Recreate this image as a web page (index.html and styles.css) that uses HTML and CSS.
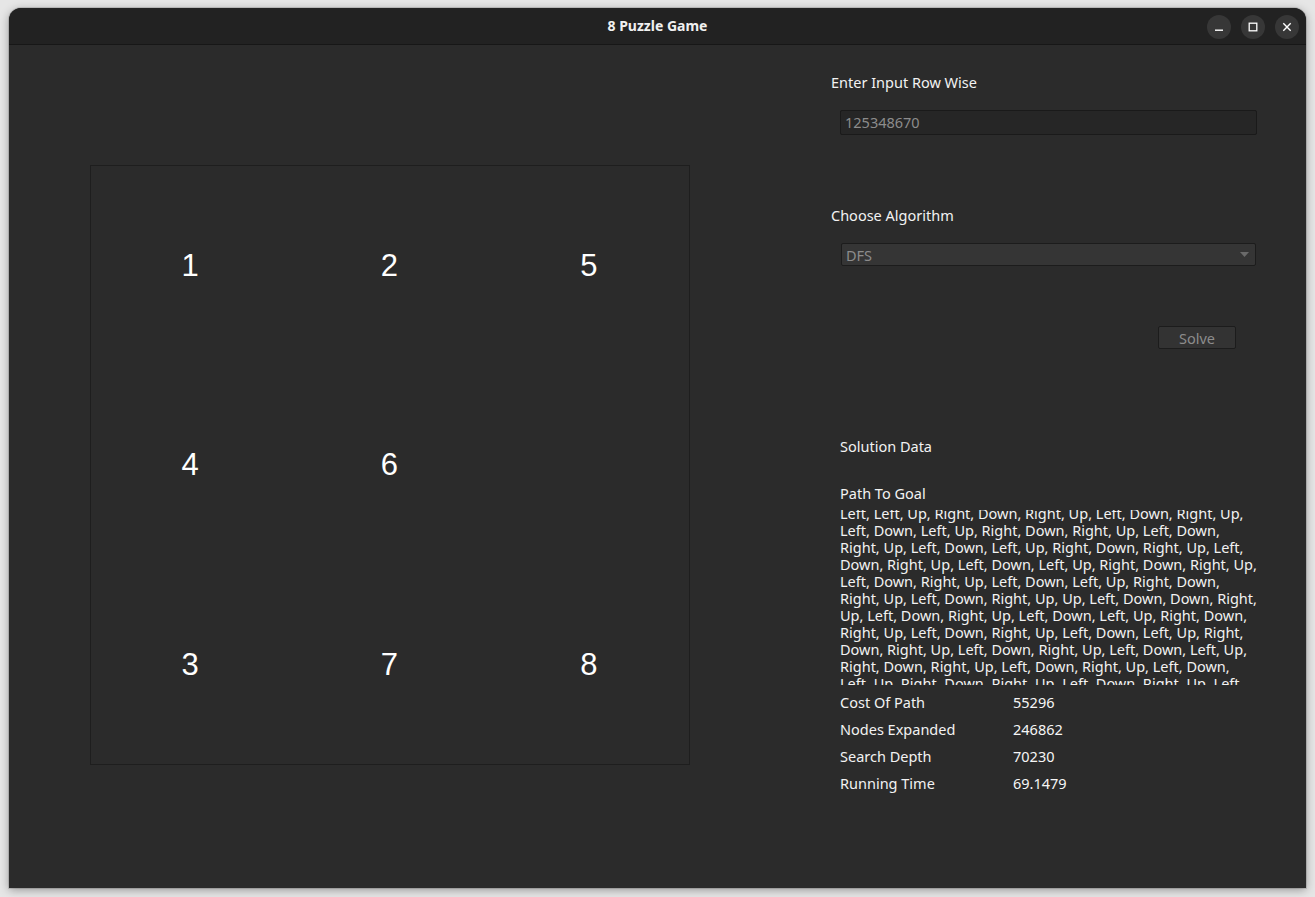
FILE: index.html
```html
<!DOCTYPE html>
<html>
<head>
<meta charset="utf-8">
<title>8 Puzzle Game</title>
<link rel="stylesheet" href="styles.css">
</head>
<body>
<div class="window">
  <div class="titlebar">
    <div class="title">8 Puzzle Game</div>
    <div class="controls">
      <div class="ctl"><svg width="12" height="12" viewBox="0 0 12 12"><rect x="2" y="8.5" width="8" height="1.4" fill="#fff"/></svg></div>
      <div class="ctl"><svg width="12" height="12" viewBox="0 0 12 12"><rect x="2.2" y="2.2" width="7.6" height="7.6" fill="none" stroke="#fff" stroke-width="1.3"/></svg></div>
      <div class="ctl"><svg width="12" height="12" viewBox="0 0 12 12"><path d="M2.3 2.3 L9.7 9.7 M9.7 2.3 L2.3 9.7" stroke="#fff" stroke-width="1.4"/></svg></div>
    </div>
  </div>
  <div class="content">
    <div class="left">
      <div class="board">
        <div class="tile">1</div><div class="tile">2</div><div class="tile">5</div>
        <div class="tile">4</div><div class="tile">6</div><div class="tile"></div>
        <div class="tile">3</div><div class="tile">7</div><div class="tile">8</div>
      </div>
    </div>
    <div class="right">
      <div class="label l1">Enter Input Row Wise</div>
      <div class="input">125348670</div>
      <div class="label l2">Choose Algorithm</div>
      <div class="select"><span>DFS</span><svg width="9" height="5" viewBox="0 0 9 5"><path d="M0 0 H9 L4.5 5 Z" fill="#6a6a6a"/></svg></div>
      <div class="btnrow"><div class="btn">Solve</div></div>
      <div class="solution">
        <div class="label sd">Solution Data</div>
        <div class="label ptg">Path To Goal</div>
        <div class="path">
          <div class="pathinner">
            <div>Left, Left, Up, Right, Down, Right, Up, Left, Down, Right, Up,</div>
            <div>Left, Down, Left, Up, Right, Down, Right, Up, Left, Down,</div>
            <div>Right, Up, Left, Down, Left, Up, Right, Down, Right, Up, Left,</div>
            <div>Down, Right, Up, Left, Down, Left, Up, Right, Down, Right, Up,</div>
            <div>Left, Down, Right, Up, Left, Down, Left, Up, Right, Down,</div>
            <div>Right, Up, Left, Down, Right, Up, Up, Left, Down, Down, Right,</div>
            <div>Up, Left, Down, Right, Up, Left, Down, Left, Up, Right, Down,</div>
            <div>Right, Up, Left, Down, Right, Up, Left, Down, Left, Up, Right,</div>
            <div>Down, Right, Up, Left, Down, Right, Up, Left, Down, Left, Up,</div>
            <div>Right, Down, Right, Up, Left, Down, Right, Up, Left, Down,</div>
            <div>Left, Up, Right, Down, Right, Up, Left, Down, Right, Up, Left,</div>
          </div>
        </div>
        <div class="stats">
          <div class="stat"><span class="k">Cost Of Path</span><span class="v">55296</span></div>
          <div class="stat"><span class="k">Nodes Expanded</span><span class="v">246862</span></div>
          <div class="stat"><span class="k">Search Depth</span><span class="v">70230</span></div>
          <div class="stat"><span class="k">Running Time</span><span class="v">69.1479</span></div>
        </div>
      </div>
    </div>
  </div>
</div>
</body>
</html>
```
FILE: styles.css
```css
* { box-sizing: border-box; }
html, body { margin: 0; padding: 0; }
body {
  background: #e6e6e6;
  width: 1315px;
  height: 897px;
  overflow: hidden;
  font-family: "Noto Sans", "Open Sans", sans-serif;
  font-size: 14.5px;
  color: #f2f2f2;
}
.window {
  margin: 8px 0 0 9px;
  width: 1297px;
  height: 880px;
  border-radius: 12px 12px 0 0;
  overflow: hidden;
  background: #2b2b2b;
  box-shadow: 0 2px 10px rgba(0,0,0,0.35), 0 0 0 1px rgba(0,0,0,0.12);
}
.titlebar {
  height: 37px;
  background: #222222;
  border-bottom: 1px solid #171717;
  display: flex;
  align-items: center;
  justify-content: center;
  position: relative;
}
.title {
  font-weight: 700;
  font-size: 14px;
  color: #f0f0f0;
  margin-top: -1px;
}
.controls {
  position: absolute;
  right: 7px;
  top: 7px;
  display: flex;
  gap: 10px;
}
.ctl {
  width: 24px;
  height: 24px;
  border-radius: 50%;
  background: #373737;
  display: flex;
  align-items: center;
  justify-content: center;
}
.content {
  display: flex;
  height: 843px;
}
.left {
  padding: 120px 0 0 81px;
  width: 681px;
  flex: none;
}
.board {
  width: 600px;
  height: 600px;
  border: 1px solid #1e1e1e;
  display: grid;
  grid-template-columns: repeat(3, 1fr);
  grid-template-rows: repeat(3, 1fr);
}
.tile {
  display: flex;
  align-items: center;
  justify-content: center;
  font-family: "Liberation Sans", Arial, sans-serif;
  font-size: 31px;
  color: #ffffff;
  padding-right: 1px;
  padding-top: 1px;
}
.right {
  margin-left: 141px;
  width: 440px;
  flex: none;
}
.label {
  height: 20px;
  line-height: 20px;
  white-space: nowrap;
}
.l1 { margin-top: 27px; }
.input {
  margin: 18px 0 0 9px;
  width: 417px;
  height: 25px;
  background: #262626;
  border: 1px solid #1a1a1a;
  border-radius: 2px;
  color: #8c8c8c;
  padding-left: 4px;
  line-height: 23px;
}
.l2 { margin-top: 70px; }
.select {
  margin: 18px 0 0 10px;
  width: 415px;
  height: 23px;
  background: #353535;
  border: 1px solid #1c1c1c;
  border-radius: 2px;
  color: #8c8c8c;
  padding: 0 6px 0 4px;
  display: flex;
  align-items: center;
  justify-content: space-between;
}
.btnrow {
  display: flex;
  margin: 60px 0 0 327px;
}
.btn {
  width: 78px;
  height: 23px;
  background: #333333;
  border: 1px solid #1c1c1c;
  border-radius: 2px;
  color: #8c8c8c;
  display: flex;
  align-items: center;
  justify-content: center;
}
.solution { margin-left: 9px; }
.sd { margin-top: 87px; }
.ptg { margin-top: 27px; }
.path {
  margin-top: 7px;
  height: 175px;
  overflow: hidden;
}
.pathinner {
  margin-top: -5px;
  line-height: 17px;
  white-space: nowrap;
}
.stats { margin-top: 4px; }
.stat {
  display: flex;
  height: 27px;
  line-height: 27px;
}
.k { width: 173px; }
.v { color: #f6f6f6; }
```
